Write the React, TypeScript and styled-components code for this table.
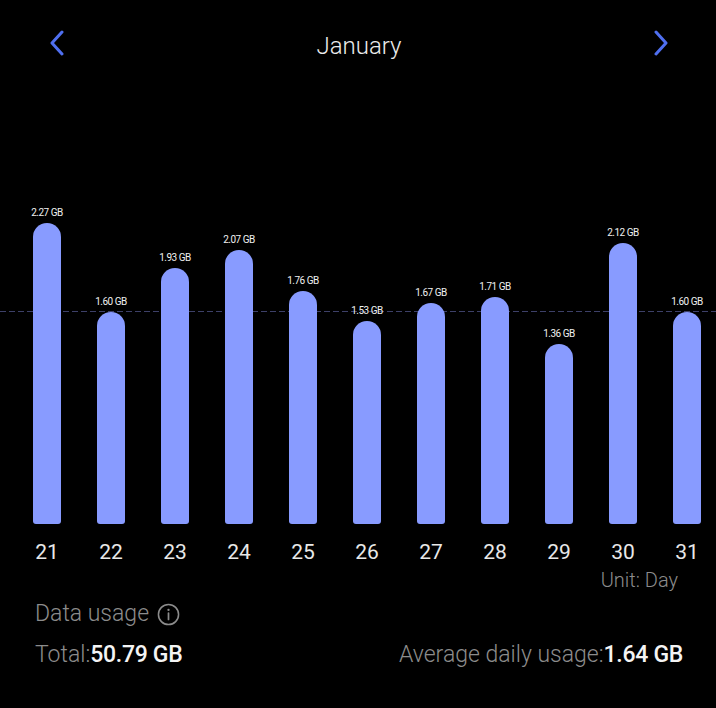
import React from 'react'
import styled, { createGlobalStyle } from 'styled-components'

const GlobalStyle = createGlobalStyle`
  html, body {
    margin: 0;
    padding: 0;
    background: #000;
  }
  body {
    font-family: Roboto, "Noto Sans", "Liberation Sans", sans-serif;
  }
`

const SCALE = 132.6
const CHART_HEIGHT = 436
const AVERAGE_LEVEL = 1.6

const days = [
  { day: 21, value: 2.27 },
  { day: 22, value: 1.6 },
  { day: 23, value: 1.93 },
  { day: 24, value: 2.07 },
  { day: 25, value: 1.76 },
  { day: 26, value: 1.53 },
  { day: 27, value: 1.67 },
  { day: 28, value: 1.71 },
  { day: 29, value: 1.36 },
  { day: 30, value: 2.12 },
  { day: 31, value: 1.6 },
]

const Page = styled.div`
  width: 716px;
  height: 708px;
  background: #000;
  color: #f2f2f2;
  overflow: hidden;
`

const Header = styled.div`
  height: 88px;
  display: flex;
  align-items: center;
  justify-content: space-between;
  padding: 0 47px 0 49px;
  box-sizing: border-box;
`

const NavButton = styled.button`
  width: 16px;
  height: 26px;
  padding: 0;
  border: none;
  background: none;
  display: flex;
  align-items: center;
  justify-content: center;
  margin-top: -2px;
`

const Title = styled.div`
  font-size: 24px;
  font-weight: 300;
  line-height: 30px;
  color: #ececec;
  padding-top: 4px;
`

const Chart = styled.div`
  position: relative;
  height: ${CHART_HEIGHT}px;
`

const AverageLine = styled.div<{ bottom: number }>`
  position: absolute;
  left: 0;
  right: 0;
  bottom: ${({ bottom }) => bottom}px;
  height: 1px;
  background: repeating-linear-gradient(
    to right,
    #3d4068 0,
    #3d4068 6px,
    transparent 6px,
    transparent 9px
  );
  z-index: 0;
`

const Columns = styled.div`
  display: grid;
  grid-template-columns: repeat(11, 64px);
  padding-left: 15px;
`

const BarColumns = styled(Columns)`
  position: relative;
  z-index: 1;
  height: 100%;
  align-items: end;
`

const BarCell = styled.div`
  display: flex;
  flex-direction: column;
  align-items: center;
  justify-content: flex-end;
  height: 100%;
`

const BarLabel = styled.div`
  font-size: 10px;
  line-height: 12px;
  letter-spacing: -0.5px;
  color: #f0f0f0;
  margin-bottom: 4px;
  white-space: nowrap;
`

const Bar = styled.div`
  width: 28px;
  background: #889bff;
  border-radius: 14px 14px 3px 3px;
`

const DayRow = styled(Columns)`
  margin-top: 16px;
`

const DayLabel = styled.div`
  text-align: center;
  font-size: 21px;
  font-weight: 400;
  line-height: 24px;
  color: #e8e8e8;
`

const UnitRow = styled.div`
  display: flex;
  justify-content: flex-end;
  padding-right: 38px;
  margin-top: 4px;
  font-size: 20px;
  font-weight: 300;
  line-height: 24px;
  color: #8c8c8c;
`

const Footer = styled.div`
  padding: 0 33px 0 35px;
  margin-top: 8px;
`

const SectionTitle = styled.div`
  display: flex;
  align-items: center;
  gap: 8px;
  font-size: 23px;
  font-weight: 300;
  line-height: 28px;
  color: #8c8c8c;
`

const StatsRow = styled.div`
  display: flex;
  justify-content: space-between;
  margin-top: 13px;
`

const Stat = styled.div`
  font-size: 23px;
  font-weight: 300;
  line-height: 28px;
  color: #8c8c8c;
  white-space: nowrap;
`

const StatValue = styled.span`
  font-weight: 500;
  color: #f4f4f4;
  letter-spacing: -0.3px;
`

const ChevronLeft = () => (
  <svg width="16" height="26" viewBox="0 0 16 26" fill="none">
    <path d="M13 2 L3 13 L13 24" stroke="#4f6ff0" strokeWidth="3" strokeLinecap="round" strokeLinejoin="round" />
  </svg>
)

const ChevronRight = () => (
  <svg width="16" height="26" viewBox="0 0 16 26" fill="none">
    <path d="M3 2 L13 13 L3 24" stroke="#4f6ff0" strokeWidth="3" strokeLinecap="round" strokeLinejoin="round" />
  </svg>
)

const InfoIcon = () => (
  <svg width="23" height="23" viewBox="0 0 24 24" fill="none">
    <circle cx="12" cy="12" r="10.5" stroke="#8c8c8c" strokeWidth="1.6" />
    <circle cx="12" cy="7.2" r="1.2" fill="#8c8c8c" />
    <path d="M12 10.5 V17.2" stroke="#8c8c8c" strokeWidth="1.8" strokeLinecap="round" />
  </svg>
)

const App: React.FC = () => {
  return (
    <Page>
      <GlobalStyle />
      <Header>
        <NavButton aria-label="Previous month">
          <ChevronLeft />
        </NavButton>
        <Title>January</Title>
        <NavButton aria-label="Next month">
          <ChevronRight />
        </NavButton>
      </Header>

      <Chart>
        <AverageLine bottom={Math.round(AVERAGE_LEVEL * SCALE)} />
        <BarColumns>
          {days.map((d) => (
            <BarCell key={d.day}>
              <BarLabel>{d.value.toFixed(2)} GB</BarLabel>
              <Bar style={{ height: Math.round(d.value * SCALE) }} />
            </BarCell>
          ))}
        </BarColumns>
      </Chart>

      <DayRow>
        {days.map((d) => (
          <DayLabel key={d.day}>{d.day}</DayLabel>
        ))}
      </DayRow>

      <UnitRow>Unit: Day</UnitRow>

      <Footer>
        <SectionTitle>
          Data usage
          <InfoIcon />
        </SectionTitle>
        <StatsRow>
          <Stat>
            Total:<StatValue>50.79 GB</StatValue>
          </Stat>
          <Stat>
            Average daily usage:<StatValue>1.64 GB</StatValue>
          </Stat>
        </StatsRow>
      </Footer>
    </Page>
  )
}

export default App
